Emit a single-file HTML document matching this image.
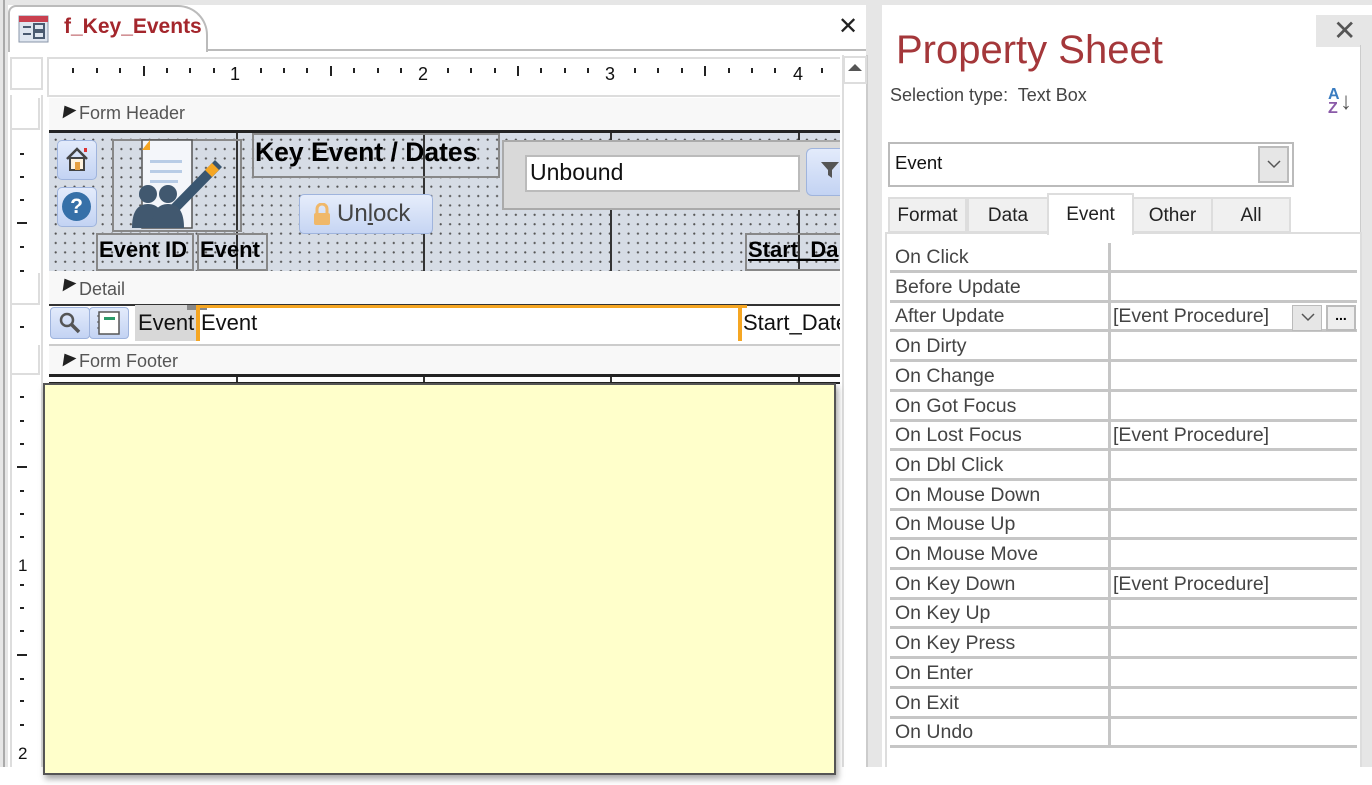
<!DOCTYPE html>
<html><head><meta charset="utf-8"><style>
*{margin:0;padding:0;box-sizing:border-box}
body{width:1372px;height:785px;background:#fff;position:relative;overflow:hidden;font-family:"Liberation Sans",sans-serif}
.a{position:absolute}
.dots{background-color:#d6dce5;background-image:radial-gradient(circle,#555 0.9px,transparent 1.3px);background-size:9.4px 9.4px;background-position:2px 2px}
.bar{background:#f8f8f8;color:#555;font-size:18px}
.bar span{position:absolute;left:30px;top:5px}
.bar i{position:absolute;left:10px;top:7px;width:0;height:0;border-left:8px solid transparent;border-right:8px solid transparent;border-bottom:10px solid #222;transform:rotate(-30deg)}
.lbl{font-weight:bold;font-size:22px;color:#000;border:2px solid #888}
.row{position:absolute;left:890px;width:467px;height:30px;border-bottom:3px solid #c6c6c6;font-size:19.5px;color:#444}
.row b{font-weight:normal;position:absolute;left:5px;top:3px}
.row em{font-style:normal;position:absolute;left:223px;top:3px}
.tab{position:absolute;top:197px;height:36px;background:#f0f0f0;border:2px solid #ddd;font-size:19px;color:#222;text-align:center;line-height:34px}
</style></head><body>
<div class="a" style="left:0;top:0;width:1372px;height:5px;background:#e6e6e6"></div>
<div class="a" style="left:0;top:0;width:8px;height:767px;background:#e6e6e6"></div>
<div class="a" style="left:3px;top:0;width:2px;height:767px;background:#aaa"></div>
<div class="a" style="left:866px;top:0;width:16px;height:767px;background:#e6e6e6"></div>
<div class="a" style="left:1358px;top:15px;width:14px;height:752px;background:#e6e6e6"></div>
<div class="a" style="left:1359px;top:45px;width:2px;height:722px;background:#ccc"></div>

<div class="a" style="left:8px;top:5px;width:858px;height:46px;background:#fff;border-bottom:2px solid #bbb"></div>
<div class="a" style="left:8px;top:5px;width:200px;height:47px;background:#fff;border:2px solid #bbb;border-bottom:none;border-radius:8px 30px 0 0"></div>
<svg class="a" style="left:18px;top:15px" width="31" height="28"><rect x="1" y="1" width="29" height="26" fill="#dfe6f0" stroke="#8a96a8"/><rect x="1" y="1" width="29" height="6" fill="#c9404f"/><rect x="5" y="11" width="8" height="2" fill="#4a5a70"/><rect x="5" y="18" width="8" height="2" fill="#4a5a70"/><rect x="16" y="9" width="10" height="6" fill="none" stroke="#4a5a70" stroke-width="2"/><rect x="16" y="17" width="10" height="6" fill="none" stroke="#4a5a70" stroke-width="2"/></svg>
<div class="a" style="left:64px;top:15px;font-size:21px;font-weight:bold;color:#a4262c">f_Key_Events</div>
<div class="a" style="left:838px;top:12px;font-size:24px;color:#222">✕</div>

<div class="a" style="left:842px;top:55px;width:26px;height:712px;background:#fff;border-left:2px solid #ddd;border-right:2px solid #ccc"></div>
<div class="a" style="left:843px;top:56px;width:24px;height:28px;border:2px solid #ddd"></div>
<div class="a" style="left:848px;top:64px;width:0;height:0;border-left:7px solid transparent;border-right:7px solid transparent;border-bottom:7px solid #555"></div>

<div class="a" style="left:10px;top:57px;width:33px;height:33px;border:2px solid #ddd"></div>
<div class="a" style="left:47px;top:57px;width:793px;height:40px;border-top:2px solid #ddd;border-left:2px solid #ddd;border-bottom:2px solid #ddd"></div>
<div id="rt"></div>
<div class="a" style="left:230px;top:64px;font-size:18px;color:#111">1</div>
<div class="a" style="left:418px;top:64px;font-size:18px;color:#111">2</div>
<div class="a" style="left:605px;top:64px;font-size:18px;color:#111">3</div>
<div class="a" style="left:793px;top:64px;font-size:18px;color:#111">4</div>

<div class="a" style="left:10px;top:95px;width:33px;height:672px;border-left:2px solid #ddd;border-right:2px solid #ddd"></div>
<div class="a" style="left:12px;top:98px;width:28px;height:32px;border-right:2px solid #ddd;border-bottom:2px solid #ddd"></div>
<div class="a" style="left:12px;top:273px;width:28px;height:32px;border-right:2px solid #ddd;border-bottom:2px solid #ddd"></div>
<div class="a" style="left:12px;top:345px;width:28px;height:30px;border-right:2px solid #ddd;border-bottom:2px solid #ddd"></div>
<div id="rl"></div>
<div class="a" style="left:18px;top:556px;font-size:17px;color:#111">1</div>
<div class="a" style="left:18px;top:744px;font-size:17px;color:#111">2</div>

<div class="a bar" style="left:49px;top:98px;width:791px;height:32px"><i></i><span>Form Header</span></div>
<div class="a" style="left:49px;top:130px;width:791px;height:3px;background:#222"></div>
<div class="a dots" style="left:49px;top:133px;width:791px;height:138px"></div>
<div class="a" style="left:236px;top:133px;width:2px;height:138px;background:#333"></div>
<div class="a" style="left:423px;top:133px;width:2px;height:138px;background:#333"></div>
<div class="a" style="left:610px;top:133px;width:2px;height:138px;background:#333"></div>
<div class="a" style="left:798px;top:133px;width:2px;height:138px;background:#333"></div>
<div class="a" style="left:57px;top:140px;width:40px;height:40px;border-radius:5px;background:linear-gradient(#e3ebfb,#c3d3f3);border:1px solid #9fb4dd"></div>
<svg class="a" style="left:63px;top:144px" width="28" height="30"><path d="M4 15 L14 5 L24 15" fill="none" stroke="#444" stroke-width="2.5"/><rect x="7" y="14" width="14" height="12" fill="#fff3e0" stroke="#444" stroke-width="2"/><rect x="12" y="18" width="5" height="8" fill="#e8a040"/><rect x="21" y="4" width="3" height="4" fill="#d33"/></svg>
<div class="a" style="left:57px;top:187px;width:40px;height:40px;border-radius:5px;background:linear-gradient(#e3ebfb,#c3d3f3);border:1px solid #9fb4dd"></div>
<div class="a" style="left:62px;top:192px;width:29px;height:29px;border-radius:50%;background:#3670a8;color:#fff;font-weight:bold;font-size:21px;text-align:center;line-height:29px">?</div>
<div class="a" style="left:112px;top:139px;width:130px;height:93px;border:2px solid #888"></div>
<svg class="a" style="left:130px;top:138px" width="100" height="92"><path d="M12 2 H62 V90 H12 V10 Z" fill="#f4f6fa" stroke="#555" stroke-width="1.5"/><path d="M12 12 L20 2 V12 Z" fill="#f5a623"/><rect x="20" y="22" width="32" height="3" fill="#b8cce6"/><rect x="20" y="32" width="32" height="3" fill="#b8cce6"/><rect x="20" y="42" width="28" height="3" fill="#b8cce6"/><path d="M38 70 L85 22 L92 29 L45 77 L34 80 Z" fill="#3a5670"/><path d="M75 32 L82 25 L89 32 L82 39 Z" fill="#f5a623"/><path d="M38 70 L45 77 L34 80Z" fill="#eedcaa"/><circle cx="18" cy="56" r="9" fill="#41586f"/><path d="M2 90 Q2 66 18 66 Q34 66 34 90Z" fill="#41586f"/><circle cx="38" cy="56" r="9" fill="#41586f"/><path d="M22 90 Q22 66 38 66 Q54 66 54 90Z" fill="#41586f"/></svg>
<div class="a lbl" style="left:252px;top:133px;width:248px;height:45px;padding:2px 0 0 1px;font-size:26.5px;white-space:nowrap">Key Event / Dates</div>
<div class="a" style="left:299px;top:194px;width:134px;height:40px;border-radius:5px;background:linear-gradient(#e6edfb,#c6d5f3);border:1px solid #9fb4dd"></div>
<svg class="a" style="left:313px;top:203px" width="18" height="22"><path d="M4 10 V6 A5 5 0 0 1 14 6 V10" fill="none" stroke="#f0b86a" stroke-width="3"/><rect x="1" y="10" width="16" height="12" rx="2" fill="#f0b86a"/></svg>
<div class="a" style="left:337px;top:200px;font-size:24px;color:#444">Un<u>l</u>ock</div>
<div class="a" style="left:502px;top:140px;width:338px;height:70px;background:#d9d9d9;border:2px solid #aaa;border-right:none"></div>
<div class="a" style="left:525px;top:155px;width:275px;height:37px;background:#fff;border:2px solid #bbb;font-size:23px;padding:2px 0 0 3px;color:#111">Unbound</div>
<div class="a" style="left:806px;top:148px;width:34px;height:48px;border-radius:6px 0 0 6px;background:linear-gradient(#e3ebfb,#c3d3f3);border:1px solid #9fb4dd;border-right:none"></div>
<svg class="a" style="left:820px;top:160px" width="20" height="20"><path d="M1 2 H19 L12 10 V18 L8 15 V10 Z" fill="#555"/></svg>
<div class="a lbl" style="left:96px;top:233px;width:98px;height:38px;padding:2px 0 0 1px">Event ID</div>
<div class="a lbl" style="left:197px;top:233px;width:71px;height:38px;padding:2px 0 0 1px">Event</div>
<div class="a lbl" style="left:745px;top:233px;width:95px;height:38px;padding:2px 0 0 1px;border-right:none;text-decoration:underline">Start_Da</div>

<div class="a bar" style="left:49px;top:271px;width:791px;height:33px"><i></i><span style="top:8px">Detail</span></div>
<div class="a" style="left:49px;top:304px;width:791px;height:2px;background:#333"></div>
<div class="a" style="left:49px;top:306px;width:791px;height:38px;background:#fff"></div>
<div class="a" style="left:50px;top:307px;width:40px;height:32px;border-radius:4px;background:linear-gradient(#e3ebfb,#c3d3f3);border:1px solid #9fb4dd"></div>
<svg class="a" style="left:58px;top:311px" width="24" height="24"><circle cx="9" cy="9" r="6" fill="none" stroke="#555" stroke-width="2.5"/><path d="M13 13 L21 21" stroke="#555" stroke-width="3.5"/></svg>
<div class="a" style="left:89px;top:307px;width:40px;height:32px;border-radius:4px;background:linear-gradient(#e3ebfb,#c3d3f3);border:1px solid #9fb4dd"></div>
<svg class="a" style="left:96px;top:310px" width="26" height="26"><rect x="3" y="2" width="20" height="22" fill="#fff" stroke="#555" stroke-width="1.5"/><rect x="8" y="7" width="11" height="3" fill="#2a9a6a"/><path d="M3 6 H1 M3 12 H1 M3 18 H1" stroke="#555"/></svg>
<div class="a" style="left:135px;top:305px;width:62px;height:36px;background:#d8d8d8"></div>
<div class="a" style="left:187px;top:305px;width:20px;height:5px;background:#888"></div>
<div class="a" style="left:197px;top:305px;width:550px;height:3px;background:#f5a623"></div>
<div class="a" style="left:196px;top:305px;width:4px;height:36px;background:#f5a623"></div>
<div class="a" style="left:738px;top:305px;width:4px;height:36px;background:#f5a623"></div>
<div class="a" style="left:138px;top:310px;font-size:22px;color:#111;width:58px;overflow:hidden;white-space:nowrap">Event</div>
<div class="a" style="left:201px;top:310px;font-size:22px;color:#111">Event</div>
<div class="a" style="left:743px;top:310px;font-size:22px;color:#111;width:97px;overflow:hidden;white-space:nowrap">Start_Date</div>

<div class="a bar" style="left:49px;top:344px;width:791px;height:30px;border-top:2px solid #ccc"><i></i><span>Form Footer</span></div>
<div class="a" style="left:49px;top:374px;width:791px;height:3px;background:#222"></div>
<div class="a" style="left:49px;top:377px;width:791px;height:6px;background:#fff"></div>
<div class="a" style="left:236px;top:377px;width:2px;height:6px;background:#333"></div>
<div class="a" style="left:423px;top:377px;width:2px;height:6px;background:#333"></div>
<div class="a" style="left:610px;top:377px;width:2px;height:6px;background:#333"></div>
<div class="a" style="left:798px;top:377px;width:2px;height:6px;background:#333"></div>
<div class="a" style="left:49px;top:382px;width:791px;height:2px;background:#222"></div>
<div class="a" style="left:43px;top:383px;width:793px;height:392px;background:#ffffcb;border:2px solid #555;box-shadow:2px 4px 6px rgba(0,0,0,.35)"></div>

<div class="a" style="left:882px;top:15px;width:478px;height:752px;background:#fff"></div>
<div class="a" style="left:1316px;top:15px;width:44px;height:32px;background:#e6e6e6"></div>
<div class="a" style="left:1333px;top:14px;font-size:28px;color:#555">✕</div>
<div class="a" style="left:896px;top:28px;font-size:40px;color:#a4373a">Property Sheet</div>
<div class="a" style="left:890px;top:85px;font-size:18px;color:#444">Selection type:&nbsp; Text Box</div>
<div class="a" style="left:1328px;top:88px;font-size:16px;font-weight:bold;line-height:14px"><span style="color:#3a7cc0">A</span><br><span style="color:#8a5aa8">Z</span></div>
<div class="a" style="left:1340px;top:88px;font-size:24px;color:#555">↓</div>
<div class="a" style="left:888px;top:142px;width:406px;height:45px;border:2px solid #bbb;font-size:18.5px;padding:8px 0 0 5px;color:#111">Event</div>
<div class="a" style="left:1258px;top:146px;width:31px;height:37px;background:#e6e6e6;border:2px solid #bbb"></div>
<svg class="a" style="left:1266px;top:158px" width="16" height="12"><path d="M2 3 L8 9 L14 3" fill="none" stroke="#555" stroke-width="1.5"/></svg>
<div class="tab" style="left:888px;width:79px">Format</div>
<div class="tab" style="left:967px;width:82px">Data</div>
<div class="tab" style="left:1047px;top:193px;width:87px;height:42px;background:#fff;border-bottom:none;line-height:40px;z-index:2">Event</div>
<div class="tab" style="left:1132px;width:81px">Other</div>
<div class="tab" style="left:1211px;width:80px">All</div>
<div class="a" style="left:885px;top:232px;width:477px;height:535px;border:2px solid #ddd;border-bottom:none"></div>
<div class="a" style="left:1108px;top:243px;width:3px;height:503px;background:#c6c6c6"></div>
<div id="rows"></div>
<div class="a" style="left:1292px;top:305px;width:30px;height:26px;background:#e6e6e6;border:1px solid #bbb"></div>
<svg class="a" style="left:1300px;top:312px" width="16" height="10"><path d="M2 2 L8 8 L14 2" fill="none" stroke="#555" stroke-width="1.5"/></svg>
<div class="a" style="left:1326px;top:305px;width:30px;height:26px;background:#eee;border:2px solid #bbb;font-size:14px;font-weight:bold;text-align:center;line-height:16px">...</div>

<script>
var n=["On Click","Before Update","After Update","On Dirty","On Change","On Got Focus","On Lost Focus","On Dbl Click","On Mouse Down","On Mouse Up","On Mouse Move","On Key Down","On Key Up","On Key Press","On Enter","On Exit","On Undo"];
var v={2:"[Event Procedure]",6:"[Event Procedure]",11:"[Event Procedure]"};
var h="";for(var i=0;i<n.length;i++){h+='<div class="row" style="top:'+(243+i*29.7)+'px"><b>'+n[i]+'</b><em>'+(v[i]||"")+'</em></div>';}
document.getElementById("rows").outerHTML=h;
var t="";for(var k=1;k<34;k++){var m=k%8;if(m==0)continue;var x=49+23.4*k;t+='<div class="a" style="left:'+Math.round(x)+'px;top:'+(m==4?66:68)+'px;width:2px;height:'+(m==4?10:5)+'px;background:#222"></div>';}
document.getElementById("rt").outerHTML=t;
var ys=[153,176,199,222,246,270,326,396,420,443,466,490,513,536,584,607,630,654,678,700,724];
var longs={222:1,466:1,654:1};
var l="";ys.forEach(function(y){var L=longs[y];l+='<div class="a" style="left:'+(L?17:20)+'px;top:'+y+'px;width:'+(L?10:4)+'px;height:2px;background:#222"></div>';});
document.getElementById("rl").outerHTML=l;
</script>
</body></html>
